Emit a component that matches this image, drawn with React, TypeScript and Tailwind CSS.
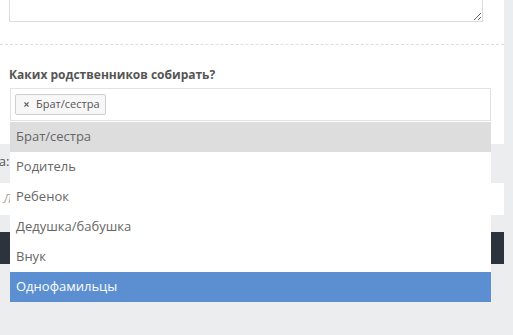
import { X } from "lucide-react";

const options = [
  "Брат/сестра",
  "Родитель",
  "Ребенок",
  "Дедушка/бабушка",
  "Внук",
  "Однофамильцы",
];

export default function App() {
  return (
    <div className="w-[513px] h-[335px] overflow-hidden bg-[#ebedef] flex font-['Open_Sans',sans-serif] text-[13px] text-[#555]">
      <div className="relative w-[504px] flex flex-col">
        {/* White form panel */}
        <div className="bg-white h-[144px] flex flex-col">
          <div className="pl-[9px] pr-[21px]">
            <textarea
              className="block w-full h-[42px] -mt-[20px] border border-[#dcdcdc] bg-white outline-none"
              readOnly
            />
          </div>
          <div className="mt-[22px] border-t border-dashed border-[#dedede]" />
          <label className="mt-[21px] pl-[9px] font-bold text-[12px] leading-[18px] text-[#555]">
            Каких родственников собирать?
          </label>
          <div className="mt-[4px] ml-[10px] w-[481px] h-[33px] border border-[#e2e2e2] flex items-start pt-[5px] pl-[4px]">
            <span className="h-[21px] flex items-center gap-[6px] pl-[7px] pr-[5px] border border-[#cfcfcf] rounded-[2px] bg-[#f7f7f7] text-[11px] text-[#555]">
              <X size={7} strokeWidth={4} className="text-[#666]" />
              Брат/сестра
            </span>
          </div>
        </div>

        {/* Lower part of the page */}
        <div className="flex flex-col">
          <div className="mt-[8px] -ml-[33px] leading-[18px] text-[#555]">Фраза:</div>
          <div className="mt-[13px] h-[32px] bg-white flex items-center pl-[3px] italic text-[#aaa]">
            Л
          </div>
          <div className="mt-[17px] h-[32px] bg-[#2c333c]" />
        </div>

        {/* Open dropdown */}
        <ul className="absolute left-[10px] top-[122px] w-[481px] bg-white">
          {options.map((o, i) => (
            <li
              key={o}
              className={
                "h-[30px] flex items-center pl-[6px] " +
                (i === 0
                  ? "bg-[#dddddd] text-[#666]"
                  : i === options.length - 1
                    ? "bg-[#5b8fd2] text-white"
                    : "text-[#666]")
              }
            >
              {o}
            </li>
          ))}
        </ul>
      </div>
    </div>
  );
}
